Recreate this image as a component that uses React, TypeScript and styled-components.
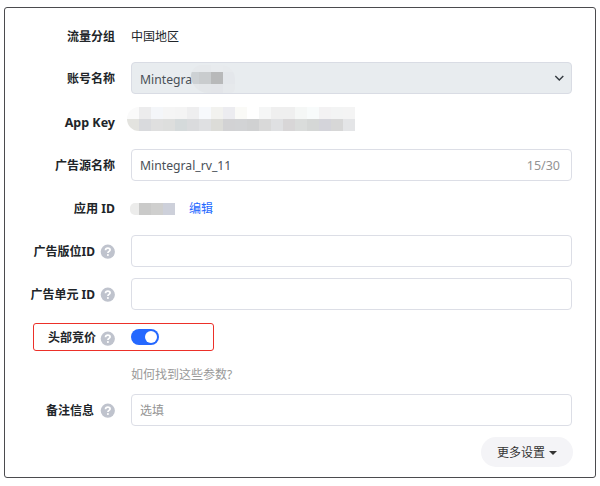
import React from "react";
import styled, { createGlobalStyle } from "styled-components";

const GlobalStyle = createGlobalStyle`
  * { box-sizing: border-box; }
  body {
    margin: 0;
    background: #fff;
    color: #212529;
    font-family: "Noto Sans", "Noto Sans CJK SC", sans-serif;
    font-size: 12px;
    line-height: 18px;
  }
`;

const Page = styled.main`
  width: 600px;
  height: 486px;
  padding: 7px 4px 8px;
`;

const Card = styled.form`
  width: 592px;
  height: 471px;
  padding: 12px 23px 0 26px;
  border: 1px solid #4b4b4e;
  border-radius: 3px;
`;

const Row = styled.div<{ $gap?: number; $height?: number }>`
  position: relative;
  display: grid;
  grid-template-columns: 84px 441px;
  column-gap: 16px;
  align-items: center;
  height: ${(p) => p.$height ?? 32}px;
  margin-top: ${(p) => p.$gap ?? 11}px;
`;

const Label = styled.label<{ $gap?: number }>`
  display: flex;
  align-items: center;
  justify-content: flex-end;
  gap: ${(p) => p.$gap ?? 5}px;
  font-weight: 700;
  white-space: nowrap;
`;

const Text = styled.span<{ $size?: number }>`
  padding-top: 2px;
  font-size: ${(p) => p.$size ?? 12}px;
`;

const Value = styled.div`
  display: flex;
  align-items: center;
`;

const Field = styled.div<{ $disabled?: boolean; $muted?: boolean }>`
  display: flex;
  align-items: center;
  height: 32px;
  padding: 0 8px;
  border: 1px solid ${(p) => (p.$disabled ? "#d9dce4" : "#dcdee6")};
  border-radius: 4px;
  background: ${(p) => (p.$disabled ? "#e8ecef" : "#fff")};
  color: ${(p) => (p.$muted ? "#939393" : "#495057")};
`;

const FieldText = styled.span<{ $width: number; $drop?: number }>`
  width: ${(p) => p.$width}px;
  flex: none;
  padding-top: ${(p) => p.$drop ?? 2}px;
  font-size: 12.2px;
  white-space: nowrap;
`;

const Counter = styled.span`
  margin-left: auto;
  padding: 2px 3px 0 0;
  color: #939393;
  font-size: 12.5px;
`;

const Chevron = styled.svg`
  margin-left: auto;
  margin-right: -1px;
`;

const Mosaic = styled.span<{ $columns: string; $rows: string; $radius: string; $shift?: number; $drop?: number }>`
  display: grid;
  flex: none;
  grid-template-columns: ${(p) => p.$columns};
  grid-template-rows: ${(p) => p.$rows};
  margin-left: ${(p) => p.$shift ?? 0}px;
  margin-top: ${(p) => p.$drop ?? 0}px;
  overflow: hidden;
  border-radius: ${(p) => p.$radius};
`;

const Tile = styled.i<{ $color: string }>`
  background: ${(p) => p.$color};
`;

const Link = styled.a`
  margin-left: 14px;
  padding-top: 2px;
  color: #2468ff;
`;

const Toggle = styled.span`
  display: flex;
  justify-content: flex-end;
  width: 28px;
  height: 16px;
  padding: 2px;
  border-radius: 8px;
  background: #2468ff;
`;

const Knob = styled.span`
  width: 12px;
  height: 12px;
  border-radius: 50%;
  background: #fff;
`;

const Highlight = styled.span`
  position: absolute;
  left: 2px;
  top: 2px;
  width: 181px;
  height: 28px;
  border: 1px solid #ec3029;
  border-radius: 3px;
`;

const Hint = styled.span`
  grid-column: 2;
  padding-top: 2px;
  color: #999;
`;

const Footer = styled.div`
  display: flex;
  justify-content: flex-end;
  margin-top: 11px;
  margin-right: -1px;
`;

const MoreButton = styled.button`
  display: flex;
  align-items: center;
  justify-content: center;
  gap: 4px;
  width: 92px;
  height: 30px;
  padding: 2px 0 0;
  border: 0;
  border-radius: 15px;
  background: #f4f4f7;
  color: #333;
  font: inherit;
`;

const Icon = styled.svg<{ $drop?: number }>`
  flex: none;
  margin-top: ${(p) => p.$drop ?? 0}px;
`;

const HelpIcon = ({ drop = 0 }: { drop?: number }) => (
  <Icon $drop={drop} width="15" height="15" viewBox="0 0 15 15">
    <circle cx="7.8" cy="7.7" r="7.1" fill="#bfc3cd" />
    <path d="M5.5 6.2C5.6 4.8 6.5 4.1 7.8 4.1c1.4 0 2.3.7 2.3 1.8 0 1.4-2.2 1.5-2.2 3" fill="none" stroke="#fff" strokeWidth="1.7" />
    <circle cx="7.9" cy="11" r="1.05" fill="#fff" />
  </Icon>
);

const keyTiles =
  "fafafa ececed f4f6f9 f5f5f5 f4f4f4 eeeeef f7f9fc f2f2ef ececf0 fafaf7 ffffff f5f6f6 efefef efefef f5f7f6 f8fbfb f3f2f3 f3f4f4 f4f4f4 e3e3df d9dadd dfdfdf dddedd d5dadb dadbdd dfe0e2 dcdcd8 d2d2d4 d2d3d5 d0d1d2 d9d9d9 dfe0e2 d8d6d7 dadcdb d5d7d6 d4d4da d7d7d7 e4e5e7".split(" ");
const accountTiles = "e6e9ec e6e9ec e8ebee e7eaed cdd1d4 c9ccce b8b9ba e4e7eb e4e7ea e3e6e9 e3e5e9 e6e9ec".split(" ");
const appTiles = "ececeb cacac9 cfcfce cdd0da".split(" ");

const tiles = (colors: string[]) => colors.map((c, i) => <Tile key={i} $color={`#${c}`} />);

export default function App() {
  return (
    <>
      <GlobalStyle />
      <Page>
        <Card>
          <Row $gap={0}>
            <Label><Text>流量分组</Text></Label>
            <Value><Text>中国地区</Text></Value>
          </Row>
          <Row $gap={10}>
            <Label><Text>账号名称</Text></Label>
            <Field $disabled>
              <FieldText $width={51} $drop={4}>Mintegra</FieldText>
              <Mosaic $columns="8px 12px 12px 12px" $rows="7px 12px 9px" $radius="14px 18px 6px 22px" $drop={1}>
                {tiles(accountTiles)}
              </Mosaic>
              <Chevron width="10" height="6" viewBox="0 0 10 6">
                <path d="M1.3 1l4 4 4-4" fill="none" stroke="#343a40" strokeWidth="1.4" />
              </Chevron>
            </Field>
          </Row>
          <Row $gap={12}>
            <Label><Text $size={12.5}>App Key</Text></Label>
            <Value>
              <Mosaic $columns="repeat(19, 12px)" $rows="12px 12px" $radius="12px 0 0 12px" $shift={-4} $drop={-6}>
                {tiles(keyTiles)}
              </Mosaic>
            </Value>
          </Row>
          <Row>
            <Label><Text>广告源名称</Text></Label>
            <Field>
              <FieldText $width={100}>Mintegral_rv_11</FieldText>
              <Counter>15/30</Counter>
            </Field>
          </Row>
          <Row>
            <Label><Text $size={12.2}>应用 ID</Text></Label>
            <Value>
              <Mosaic $columns="9px 12px 12px 12px" $rows="12px" $radius="5px 0 0 5px" $shift={-1} $drop={2}>
                {tiles(appTiles)}
              </Mosaic>
              <Link>编辑</Link>
            </Value>
          </Row>
          <Row>
            <Label><Text>广告版位ID</Text><HelpIcon /></Label>
            <Field />
          </Row>
          <Row>
            <Label><Text>广告单元 ID</Text><HelpIcon /></Label>
            <Field />
          </Row>
          <Row>
            <Label $gap={4}><Text>头部竞价</Text><HelpIcon drop={2} /></Label>
            <Value>
              <Toggle role="switch" aria-checked="true"><Knob /></Toggle>
            </Value>
            <Highlight />
          </Row>
          <Row $height={20}>
            <Hint>如何找到这些参数?</Hint>
          </Row>
          <Row $gap={10}>
            <Label $gap={6}><Text>备注信息</Text><HelpIcon /></Label>
            <Field $muted><Text>选填</Text></Field>
          </Row>
          <Footer>
            <MoreButton type="button">
              更多设置
              <Icon width="8" height="4" viewBox="0 0 8 4">
                <path d="M0 0h8L4 4z" fill="#333" />
              </Icon>
            </MoreButton>
          </Footer>
        </Card>
      </Page>
    </>
  );
}
